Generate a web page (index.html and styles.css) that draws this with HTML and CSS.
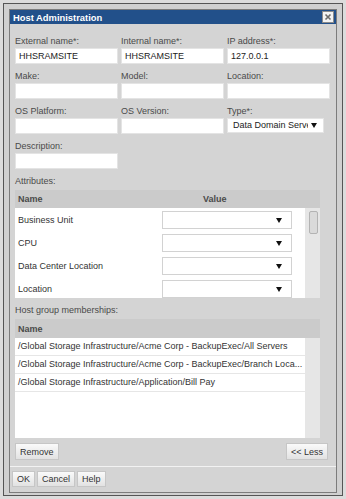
FILE: index.html
```html
<!DOCTYPE html>
<html lang="en">
<head>
    <meta charset="UTF-8">
    <title>Host Administration</title>
    <link rel="stylesheet" href="styles.css">
</head>
<body>
    <div class="window">
        <div class="frame">
            <div class="dialog">
                <div class="titlebar">
                    <span class="title">Host Administration</span>
                    <span class="close">
                        <svg width="12" height="12" viewBox="0 0 12 12">
                            <rect x="0.5" y="0.5" width="11" height="11" fill="#f3f3f3" stroke="#8c8c8c"/>
                            <path d="M3.5 3.5 L8.5 8.5 M8.5 3.5 L3.5 8.5" stroke="#6b6b6b" stroke-width="1.6"/>
                        </svg>
                    </span>
                </div>

                <div class="content">
                    <div class="fields">
                        <div class="field"><label>External name*:</label><input type="text" value="HHSRAMSITE"></div>
                        <div class="field"><label>Internal name*:</label><input type="text" value="HHSRAMSITE"></div>
                        <div class="field"><label>IP address*:</label><input type="text" value="127.0.0.1"></div>

                        <div class="field"><label>Make:</label><input type="text"></div>
                        <div class="field"><label>Model:</label><input type="text"></div>
                        <div class="field"><label>Location:</label><input type="text"></div>

                        <div class="field"><label>OS Platform:</label><input type="text"></div>
                        <div class="field"><label>OS Version:</label><input type="text"></div>
                        <div class="field"><label>Type*:</label><div class="select type-select"><span class="select-text">Data Domain Serve</span></div></div>

                        <div class="field"><label>Description:</label><input type="text"></div>
                    </div>

                    <div class="section-label">Attributes:</div>
                    <div class="grid attr-grid">
                        <div class="grid-head">
                            <div class="col-name">Name</div>
                            <div class="col-value">Value</div>
                        </div>
                        <div class="grid-body">
                            <div class="rows">
                                <div class="attr-row"><div class="col-name">Business Unit</div><div class="cell-value"><div class="select"></div></div></div>
                                <div class="attr-row"><div class="col-name">CPU</div><div class="cell-value"><div class="select"></div></div></div>
                                <div class="attr-row"><div class="col-name">Data Center Location</div><div class="cell-value"><div class="select"></div></div></div>
                                <div class="attr-row"><div class="col-name">Location</div><div class="cell-value"><div class="select"></div></div></div>
                            </div>
                            <div class="scroll"><div class="thumb"></div></div>
                        </div>
                    </div>

                    <div class="section-label">Host group memberships:</div>
                    <div class="grid group-grid">
                        <div class="grid-head">
                            <div class="col-name">Name</div>
                        </div>
                        <div class="grid-body">
                            <div class="rows">
                                <div class="group-row">/Global Storage Infrastructure/Acme Corp - BackupExec/All Servers</div>
                                <div class="group-row">/Global Storage Infrastructure/Acme Corp - BackupExec/Branch Loca...</div>
                                <div class="group-row">/Global Storage Infrastructure/Application/Bill Pay</div>
                            </div>
                            <div class="scroll"></div>
                        </div>
                    </div>

                    <div class="grid-actions">
                        <button>Remove</button>
                        <button>&lt;&lt; Less</button>
                    </div>
                </div>

                <div class="footer">
                    <button>OK</button>
                    <button>Cancel</button>
                    <button>Help</button>
                </div>
            </div>
        </div>
    </div>
</body>
</html>
```

FILE: styles.css
```css
body {
    margin: 0;
    font-family: "Liberation Sans", Arial, sans-serif;
    font-size: 9px;
    color: #333;
    background: #dcdcdc;
}
.window {
    width: 346px;
    height: 499px;
    box-sizing: border-box;
    padding: 3px;
    background: #dcdcdc;
}
.frame {
    height: 100%;
    box-sizing: border-box;
    border: 1px solid #555;
    padding: 5px 5px 2px 5px;
    background: #d0d0d0;
}
.dialog {
    height: 100%;
    box-sizing: border-box;
    border: 1px solid #7c7c7c;
    background: #d4d4d4;
    display: flex;
    flex-direction: column;
}
.titlebar {
    height: 14px;
    background: #22508a;
    color: white;
    display: flex;
    align-items: center;
    justify-content: space-between;
    padding: 0 2px 0 3px;
}
.title {
    font-weight: bold;
    font-size: 9.4px;
}
.close {
    display: flex;
}
.content {
    flex: 1;
    padding: 10px 8px 0 5px;
}
.fields {
    display: grid;
    grid-template-columns: repeat(3, 103px);
    column-gap: 3px;
    row-gap: 5px;
}
.field label {
    display: block;
    line-height: 14px;
    color: #4a4a4a;
}
.field input {
    display: block;
    width: 100%;
    height: 16px;
    box-sizing: border-box;
    border: 1px solid #e4e4e4;
    background: white;
    font-family: inherit;
    font-size: 9px;
    color: #222;
    padding: 0 3px;
    margin: 0;
}
.select {
    position: relative;
    box-sizing: border-box;
    background: white;
    border: 1px solid #d2d2d2;
    height: 18px;
    width: 130px;
}
.select::after {
    content: "";
    position: absolute;
    right: 9px;
    top: 6px;
    border-left: 3px solid transparent;
    border-right: 3px solid transparent;
    border-top: 5px solid #111;
}
.type-select {
    width: 97px;
    height: 15px;
    border-color: #e4e4e4;
    padding: 0 0 0 5px;
    line-height: 13px;
    color: #222;
}
.select-text {
    display: block;
    width: 75px;
    overflow: hidden;
    white-space: nowrap;
}
.type-select::after {
    right: 6px;
    top: 4px;
}
.section-label {
    line-height: 14px;
    color: #4a4a4a;
    margin-top: 5px;
    margin-bottom: 2px;
}
.grid {
    width: 305px;
}
.grid-head {
    display: flex;
    height: 18px;
    align-items: center;
    background: #cbcbcb;
    font-weight: bold;
    color: #4a4a4a;
}
.grid-head .col-name {
    padding-left: 3px;
}
.attr-grid .col-name {
    width: 142px;
    padding-left: 3px;
}
.attr-grid .col-value {
    padding-left: 43px;
}
.grid-body {
    display: flex;
}
.rows {
    width: 290px;
    background: white;
    overflow: hidden;
}
.scroll {
    width: 15px;
    background: #e6e6e6;
    position: relative;
}
.thumb {
    position: absolute;
    left: 4px;
    top: 3px;
    width: 7px;
    height: 21px;
    background: #dadada;
    border: 1px solid #b3b3b3;
    border-radius: 2px;
}
.attr-grid .grid-body {
    height: 90px;
}
.attr-row {
    display: flex;
    align-items: center;
    height: 23px;
}
.cell-value {
    padding-left: 2px;
}
.group-grid .grid-head {
    height: 19px;
}
.group-grid .grid-body {
    height: 100px;
}
.group-row {
    height: 18px;
    box-sizing: border-box;
    line-height: 17px;
    border-bottom: 1px solid #e6e6e6;
    padding-left: 3px;
    white-space: nowrap;
}
button {
    font-family: inherit;
    font-size: 9px;
    color: #333;
    background: linear-gradient(#fafafa, #e2e2e2);
    border: 1px solid #c6c6c6;
    height: 17px;
    padding: 0 4px;
    margin: 0;
    cursor: pointer;
}
.grid-actions {
    display: flex;
    justify-content: space-between;
    margin-top: 5px;
}
.footer {
    border-top: 1px solid #f2f2f2;
    padding: 4px 2px 5px;
    display: flex;
    gap: 2px;
}
.footer button {
    height: 16px;
}
```
